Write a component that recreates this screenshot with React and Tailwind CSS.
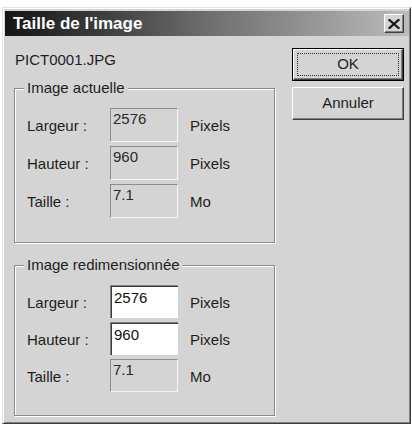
import React from "react";

function Field({ value, editable, h }) {
  if (editable) {
    return (
      <div
        className={`w-[68px] ${h} bg-white border-t border-l border-[#808080] border-b-[#f4f4f4] border-r-[#f4f4f4] shadow-[inset_1px_1px_0_#3a3a3a] pl-[3px] pt-[3px] leading-[17px] text-[15px] text-[#111]`}
      >
        {value}
      </div>
    );
  }
  return (
    <div
      className={`w-[68px] ${h} bg-[#d4d4d4] border border-t-[#8c8c8c] border-l-[#8c8c8c] border-b-[#f6f6f6] border-r-[#f6f6f6] pl-[2px] pt-[1px] leading-[17px] text-[15px] text-[#2a2a2a]`}
    >
      {value}
    </div>
  );
}

function Row({ label, value, unit, editable, h }) {
  return (
    <div className={`flex items-center ${h}`}>
      <div className="w-[83px] pt-[2px] text-[15px] leading-[18px] text-[#1e1e1e]">{label}</div>
      <Field value={value} editable={editable} h={h} />
      <div className="ml-[12px] pt-[2px] text-[15px] leading-[18px] text-[#1e1e1e]">{unit}</div>
    </div>
  );
}

function Group({ title, children, h }) {
  return (
    <div
      className={`relative w-[261px] ${h} border border-[#8a8a8a] shadow-[inset_1px_1px_0_#ffffff,1px_1px_0_#ffffff] pl-[12px] pt-[19px]`}
    >
      <span className="absolute left-[9px] -top-[10px] bg-[#d4d4d4] px-[3px] text-[15px] leading-[18px] text-[#1e1e1e]">
        {title}
      </span>
      {children}
    </div>
  );
}

function Button({ children, isDefault }) {
  if (isDefault) {
    return (
      <div className="w-[112px] h-[33px] border border-black bg-[#d4d4d4]">
        <div className="w-full h-full border border-t-white border-l-white border-b-[#404040] border-r-[#404040] shadow-[inset_-1px_-1px_0_#808080] p-[3px]">
          <div className="w-full h-full border border-dotted border-[#303030] flex items-center justify-center text-[15px] text-[#1e1e1e]">
            {children}
          </div>
        </div>
      </div>
    );
  }
  return (
    <div className="w-[112px] h-[33px] bg-[#d4d4d4] border border-t-white border-l-white border-b-[#404040] border-r-[#404040] shadow-[inset_-1px_-1px_0_#808080] flex items-center justify-center text-[15px] text-[#1e1e1e]">
      {children}
    </div>
  );
}

export default function App() {
  return (
    <div className="w-[412px] h-[426px] bg-white overflow-hidden font-['Liberation_Sans',Arial,sans-serif]">
      <div className="ml-[2px] mt-[7px] w-[409px] h-[417px] bg-[#d4d4d4] border border-t-[#e4e4e4] border-l-[#e4e4e4] border-b-[#3c3c3c] border-r-[#3c3c3c] shadow-[inset_1px_1px_0_#ffffff,inset_-1px_-1px_0_#808080] p-[2px] flex flex-col">
        <div className="mt-[1px] h-[25px] w-[404px] bg-gradient-to-r from-[#161616] via-[#6e6e6e] to-[#bcbcbc] flex items-center justify-between pl-[8px] pr-[5px]">
          <span className="text-white font-bold text-[17px] leading-[20px]">Taille de l'image</span>
          <div className="w-[20px] h-[19px] bg-[#d4d4d4] border border-t-white border-l-white border-b-[#404040] border-r-[#404040] shadow-[inset_-1px_-1px_0_#808080] flex items-center justify-center">
            <svg width="12" height="10" viewBox="0 0 12 10">
              <path d="M1.5 1 L10.5 9 M10.5 1 L1.5 9" stroke="#1a1a1a" strokeWidth="2.3" strokeLinecap="square" />
            </svg>
          </div>
        </div>
        <div className="flex pl-[9px] pt-[12px]">
          <div className="flex flex-col w-[261px]">
            <div className="h-[20px] mt-[2px] pl-[1px] text-[15px] leading-[20px] text-[#1e1e1e]">PICT0001.JPG</div>
            <div className="mt-[18px]">
              <Group title="Image actuelle" h="h-[155px]">
                <div className="flex flex-col gap-[4px]">
                  <Row label="Largeur :" value="2576" unit="Pixels" h="h-[34px]" />
                  <Row label="Hauteur :" value="960" unit="Pixels" h="h-[34px]" />
                  <Row label="Taille :" value="7.1" unit="Mo" h="h-[34px]" />
                </div>
              </Group>
            </div>
            <div className="mt-[22px]">
              <Group title="Image redimensionnée" h="h-[151px]">
                <div className="flex flex-col gap-[4px]">
                  <Row label="Largeur :" value="2576" unit="Pixels" editable h="h-[33px]" />
                  <Row label="Hauteur :" value="960" unit="Pixels" editable h="h-[33px]" />
                  <Row label="Taille :" value="7.1" unit="Mo" h="h-[33px]" />
                </div>
              </Group>
            </div>
          </div>
          <div className="ml-[17px] flex flex-col gap-[6px]">
            <Button isDefault>OK</Button>
            <Button>Annuler</Button>
          </div>
        </div>
      </div>
    </div>
  );
}
